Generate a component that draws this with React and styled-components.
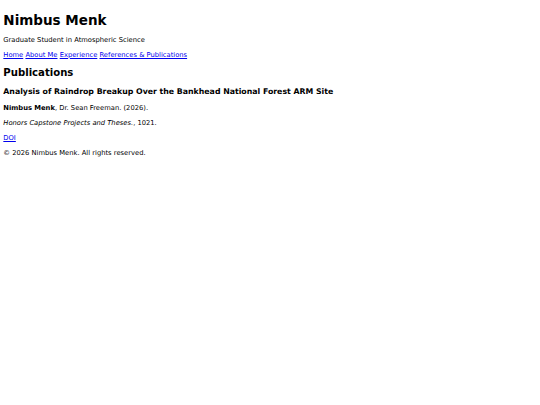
import styled, { createGlobalStyle } from "styled-components";

const GlobalStyle = createGlobalStyle`
  body {
    margin: 3.33px;
    font-family: "DejaVu Sans", Verdana, sans-serif;
    font-size: 6.75px;
    color: #000;
    background: #fff;
  }
`;

const Title = styled.h1`
  font-size: 2em;
  margin: 0.62em 0;
`;

const Tagline = styled.p`
  margin: 1em 0;
`;

const Nav = styled.nav`
  display: block;
`;

const NavLink = styled.a`
  color: #0000ee;
`;

const SectionTitle = styled.h2`
  font-size: 1.5em;
  margin: 0.83em 0;
`;

const PubTitle = styled.h3`
  font-size: 7.8px;
  margin: 7px 0 8px;
`;

const Line = styled.p`
  margin: 1.05em 0;
`;

const Link = styled.a`
  color: #0000ee;
`;

export default function App() {
  return (
    <>
      <GlobalStyle />
      <header>
        <Title>Nimbus Menk</Title>
        <Tagline>Graduate Student in Atmospheric Science</Tagline>
        <Nav>
          <NavLink href="#">Home</NavLink>{" "}
          <NavLink href="#">About Me</NavLink>{" "}
          <NavLink href="#">Experience</NavLink>{" "}
          <NavLink href="#">References &amp; Publications</NavLink>
        </Nav>
      </header>
      <main>
        <SectionTitle>Publications</SectionTitle>
        <article>
          <PubTitle>
            Analysis of Raindrop Breakup Over the Bankhead National Forest ARM Site
          </PubTitle>
          <Line>
            <strong>Nimbus Menk</strong>, Dr. Sean Freeman. (2026).
          </Line>
          <Line>
            <em>Honors Capstone Projects and Theses.</em>, 1021.
          </Line>
          <Line>
            <Link href="#">DOI</Link>
          </Line>
        </article>
      </main>
      <footer>
        <Line>© 2026 Nimbus Menk. All rights reserved.</Line>
      </footer>
    </>
  );
}
